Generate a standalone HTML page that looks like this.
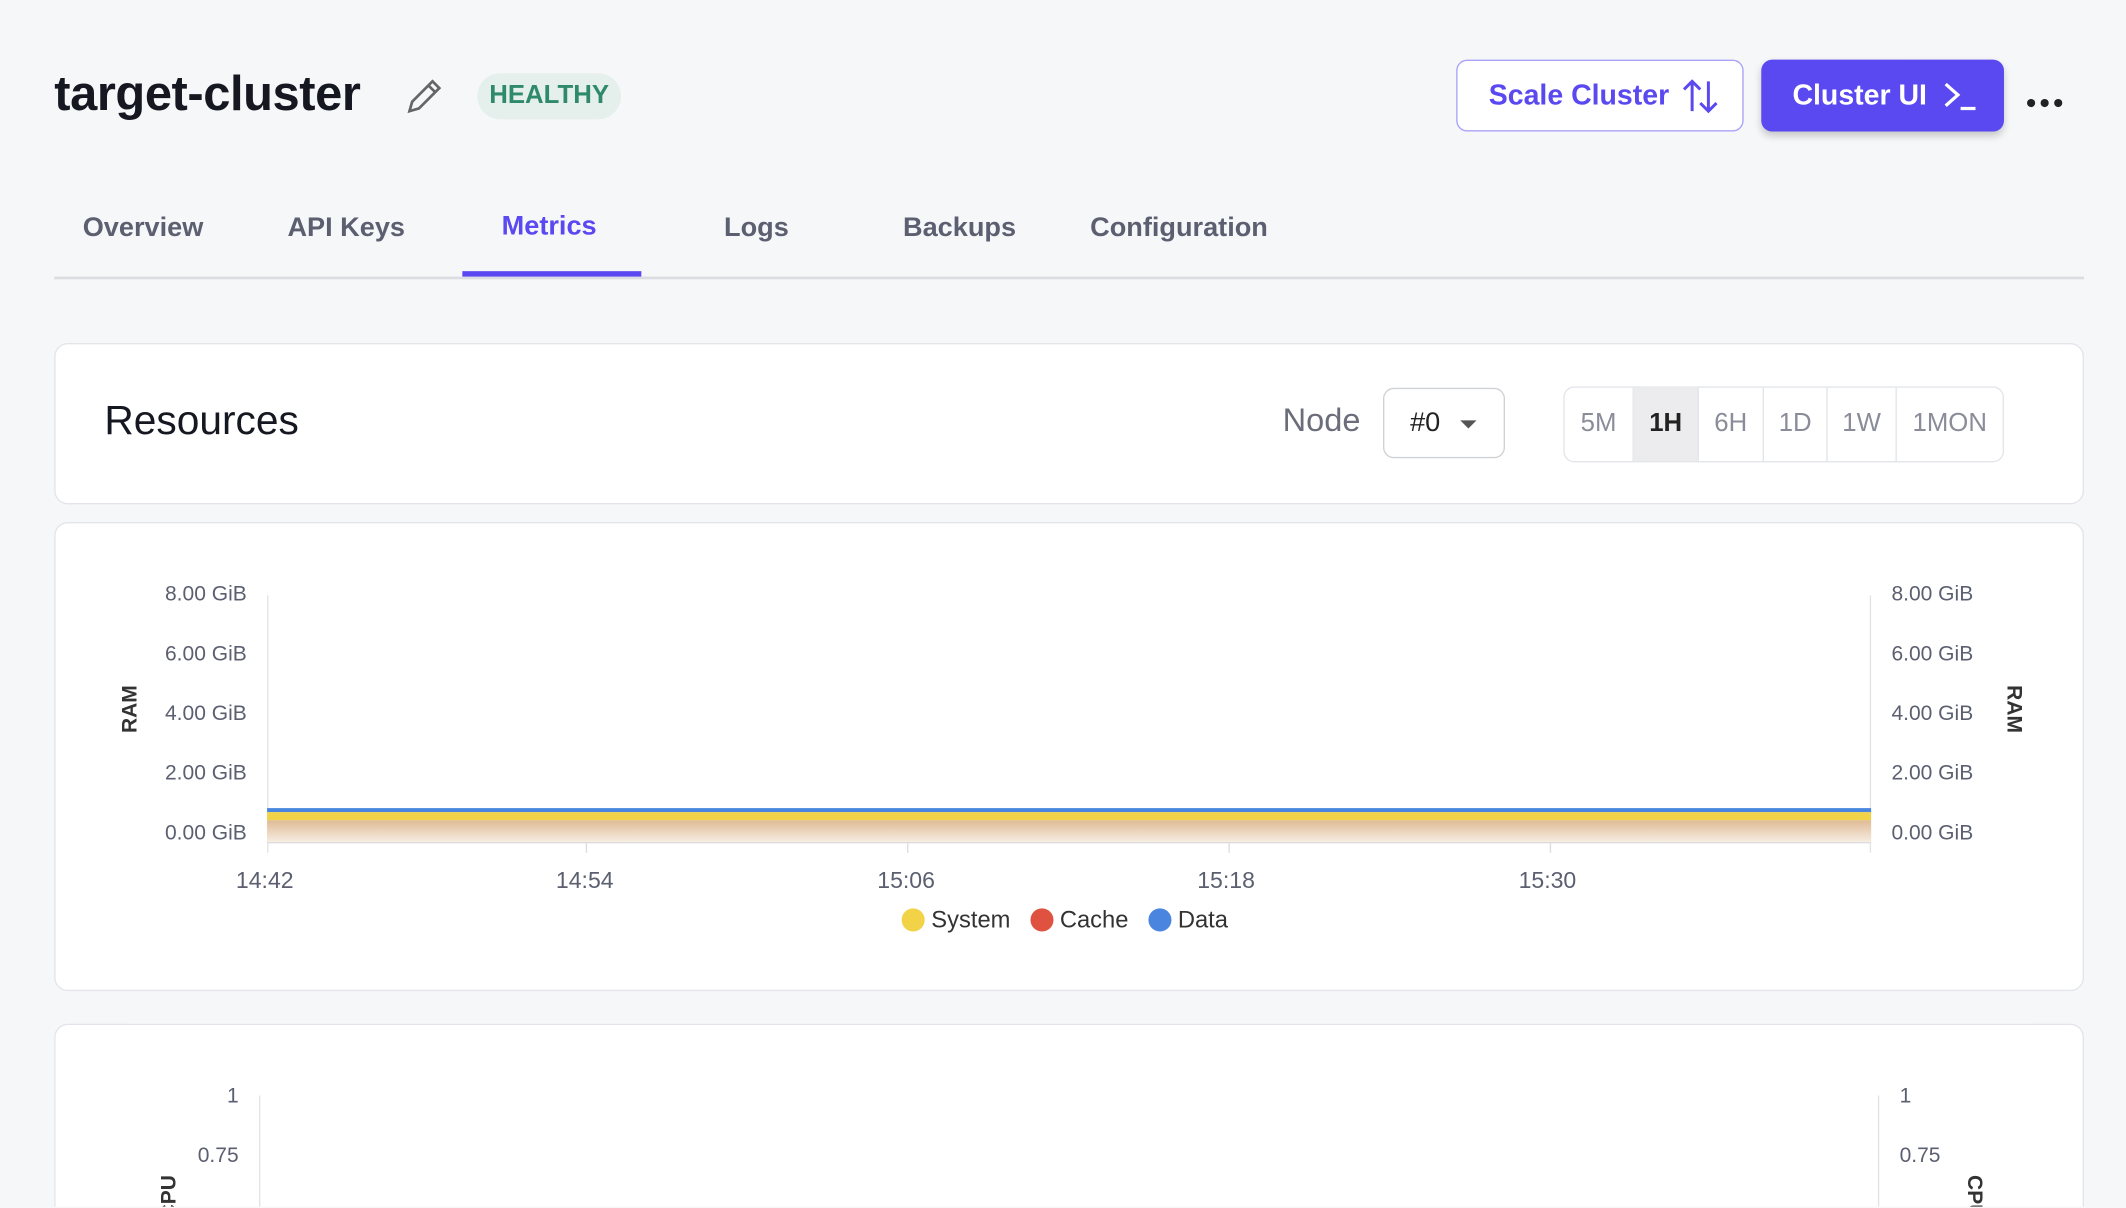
<!DOCTYPE html>
<html><head><meta charset="utf-8"><style>
html,body{margin:0;padding:0;background:#f6f7f9;overflow:hidden;width:2126px;height:1208px}
#w{position:absolute;left:0;top:0;width:1568px;height:890px;overflow:hidden;transform:scale(1.35587);transform-origin:0 0;font-family:"Liberation Sans",sans-serif;}
.a{position:absolute}
.tab{position:absolute;top:157px;font-size:20px;color:#5b5f70;font-weight:bold}
.card{position:absolute;left:40px;width:1495px;background:#fff;border:1px solid #e3e5ea;border-radius:10px}
.tl{position:absolute;font-size:15.5px;color:#5b5f70}
.r{text-align:right;width:90px}
.seg{display:inline-block;height:54px;line-height:54px;text-align:center;font-size:19px;color:#8a8d99;border-right:1px solid #e3e5ea;vertical-align:top}
.lg{display:inline-block;width:17px;height:17px;border-radius:50%;vertical-align:-3px}
</style></head><body><div id="w">
<div class="a" style="left:40px;top:48px;font-size:36px;font-weight:bold;color:#151821;letter-spacing:-0.3px">target-cluster</div>
<svg class="a" style="left:298px;top:56px" width="30" height="30" viewBox="0 0 30 30"><path d="M4 26 L6 19 L21 4 L26 9 L11 24 Z M18 7 L23 12" fill="none" stroke="#666" stroke-width="2"/></svg>
<div class="a" style="left:352px;top:54px;width:106px;height:34px;border-radius:17px;background:#e5efec;color:#2f8a6c;font-weight:bold;font-size:19px;text-align:center;line-height:34px">HEALTHY</div>
<div class="a" style="left:1074px;top:44px;width:212px;height:53px;border:1.5px solid #a9a2f5;border-radius:8px;background:#fff;color:#5a48f0;font-weight:bold;font-size:21px;line-height:51px;box-sizing:border-box;padding-left:23px">Scale Cluster</div>
<svg class="a" style="left:1240px;top:58px" width="30" height="26" viewBox="0 0 30 26"><path d="M8 24V2M2 8l6-6 6 6M20 2v22M14 18l6 6 6-6" fill="none" stroke="#5a48f0" stroke-width="2.2"/></svg>
<div class="a" style="left:1299px;top:44px;width:179px;height:53px;border-radius:8px;background:#5a48f0;color:#fff;font-weight:bold;font-size:21px;line-height:53px;padding-left:23px;box-sizing:border-box;box-shadow:0 3px 6px rgba(0,0,0,.2)">Cluster UI</div>
<svg class="a" style="left:1432px;top:58px" width="28" height="26" viewBox="0 0 28 26"><path d="M3 4l9 8-9 8M14 22h11" fill="none" stroke="#fff" stroke-width="2.4"/></svg>
<div class="a" style="left:1494px;top:67px"><svg width="30" height="8"><circle cx="4" cy="4" r="3" fill="#222"/><circle cx="14" cy="4" r="3" fill="#222"/><circle cx="24" cy="4" r="3" fill="#222"/></svg></div>
<div class="tab" style="left:61px">Overview</div>
<div class="tab" style="left:212px">API Keys</div>
<div class="tab" style="left:370px;top:156px;color:#5a48f0">Metrics</div>
<div class="tab" style="left:534px">Logs</div>
<div class="tab" style="left:666px">Backups</div>
<div class="tab" style="left:804px">Configuration</div>
<div class="a" style="left:40px;top:204px;width:1497px;height:2px;background:#dcdde1"></div>
<div class="a" style="left:341px;top:200px;width:132px;height:4px;background:#5a48f0"></div>

<div class="card" style="top:253px;height:117px">
<div class="a" style="left:36px;top:40px;font-size:30px;color:#151821">Resources</div>
<div class="a" style="left:905px;top:43px;font-size:24px;color:#6b6e7a">Node</div>
<div class="a" style="left:979px;top:32px;width:90px;height:52px;border:1px solid #cfd1d6;border-radius:8px;box-sizing:border-box;font-size:20px;color:#222;line-height:50px;padding-left:19px">#0<span style="position:absolute;left:56px;top:23px;border:6px solid transparent;border-top:6px solid #555"></span></div>
<div class="a" style="left:1112px;top:31px;height:54px;border:1px solid #e3e5ea;border-radius:8px;overflow:hidden;white-space:nowrap;font-size:0"><span class="seg" style="width:50px">5M</span><span class="seg" style="width:47px;background:#ececef;color:#222;font-weight:bold">1H</span><span class="seg" style="width:47px">6H</span><span class="seg" style="width:46px">1D</span><span class="seg" style="width:50px">1W</span><span class="seg" style="width:78px;border:0">1MON</span></div>
</div>

<div class="card" style="top:385px;height:344px">
<div class="a" style="left:156px;top:53px;width:1px;height:190px;background:#e3e3e3"></div>
<div class="a" style="left:1338px;top:53px;width:1px;height:190px;background:#e3e3e3"></div>
<div class="a" style="left:156px;top:210px;width:1183px;height:3px;background:#4a86df"></div>
<div class="a" style="left:156px;top:213px;width:1183px;height:6px;background:#f2d246"></div>
<div class="a" style="left:156px;top:219px;width:1183px;height:16px;background:linear-gradient(#dfbb95,#f6ede2)"></div>
<div class="a" style="left:156px;top:235px;width:1183px;height:1px;background:#ddd"></div>
<div class="tl r" style="left:51px;top:44px">8.00 GiB</div><div class="tl r" style="left:51px;top:88px">6.00 GiB</div><div class="tl r" style="left:51px;top:132px">4.00 GiB</div><div class="tl r" style="left:51px;top:176px">2.00 GiB</div><div class="tl r" style="left:51px;top:220px">0.00 GiB</div>
<div class="tl" style="left:1354px;top:44px">8.00 GiB</div><div class="tl" style="left:1354px;top:88px">6.00 GiB</div><div class="tl" style="left:1354px;top:132px">4.00 GiB</div><div class="tl" style="left:1354px;top:176px">2.00 GiB</div><div class="tl" style="left:1354px;top:220px">0.00 GiB</div>
<div class="tl" style="left:38px;top:128px;transform:rotate(-90deg);font-weight:bold;color:#333">RAM</div>
<div class="tl" style="left:1426px;top:128px;transform:rotate(90deg);font-weight:bold;color:#333">RAM</div>
<div class="a" style="left:391px;top:235px;width:1px;height:8px;background:#ddd"></div><div class="a" style="left:628px;top:235px;width:1px;height:8px;background:#ddd"></div><div class="a" style="left:865px;top:235px;width:1px;height:8px;background:#ddd"></div><div class="a" style="left:1102px;top:235px;width:1px;height:8px;background:#ddd"></div>
<div class="tl" style="left:133px;top:254px;font-size:17px">14:42</div><div class="tl" style="left:369px;top:254px;font-size:17px">14:54</div><div class="tl" style="left:606px;top:254px;font-size:17px">15:06</div><div class="tl" style="left:842px;top:254px;font-size:17px">15:18</div><div class="tl" style="left:1079px;top:254px;font-size:17px">15:30</div>
<div class="a" style="left:624px;top:282px;font-size:17.5px;color:#333;white-space:nowrap"><span class="lg" style="background:#f2d246"></span> System &nbsp;&nbsp;<span class="lg" style="background:#e05240"></span> Cache &nbsp;&nbsp;<span class="lg" style="background:#4a86df"></span> Data</div>
</div>

<div class="card" style="top:755px;height:134px;border-bottom:0;border-radius:10px 10px 0 0;overflow:hidden">
<div class="a" style="left:150px;top:52px;width:1px;height:90px;background:#e3e3e3"></div>
<div class="a" style="left:1344px;top:52px;width:1px;height:90px;background:#e3e3e3"></div>
<div class="tl r" style="left:45px;top:44px">1</div><div class="tl r" style="left:45px;top:88px">0.75</div>
<div class="tl" style="left:1360px;top:44px">1</div><div class="tl" style="left:1360px;top:88px">0.75</div>
<div class="tl" style="left:68px;top:118px;transform:rotate(-90deg);font-weight:bold;color:#333">CPU</div>
<div class="tl" style="left:1398px;top:118px;transform:rotate(90deg);font-weight:bold;color:#333">CPU</div>
</div>
</div></body></html>
